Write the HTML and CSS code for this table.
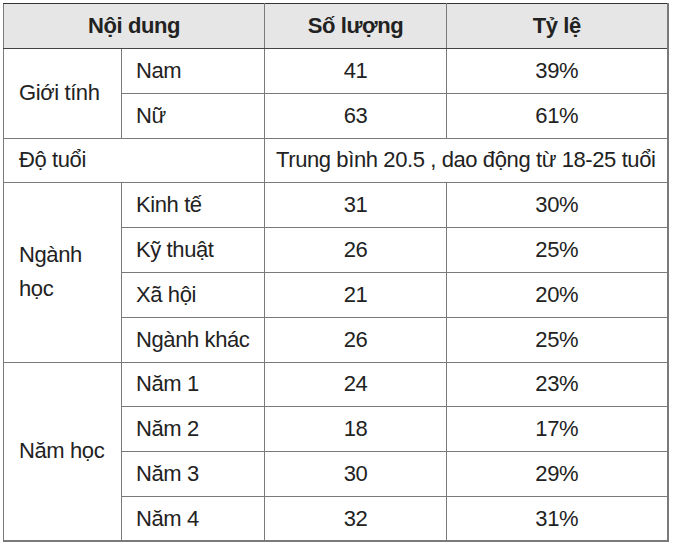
FILE: index.html
```html
<!DOCTYPE html>
<html lang="vi">
<head>
<meta charset="utf-8">
<title>Bảng thống kê</title>
<link rel="stylesheet" href="styles.css">
</head>
<body>
<table class="stats">
  <colgroup>
    <col class="c1"><col class="c2"><col class="c3"><col class="c4">
  </colgroup>
  <thead>
    <tr class="head">
      <th colspan="2">Nội dung</th>
      <th>Số lượng</th>
      <th>Tỷ lệ</th>
    </tr>
  </thead>
  <tbody>
    <tr><td class="group" rowspan="2">Giới tính</td><td class="sub">Nam</td><td class="num">41</td><td class="num">39%</td></tr>
    <tr><td class="sub">Nữ</td><td class="num">63</td><td class="num">61%</td></tr>
    <tr><td class="group" colspan="2">Độ tuổi</td><td class="num" colspan="2">Trung bình 20.5 , dao động từ 18-25 tuổi</td></tr>
    <tr><td class="group narrow" rowspan="4">Ngành học</td><td class="sub">Kinh tế</td><td class="num">31</td><td class="num">30%</td></tr>
    <tr><td class="sub">Kỹ thuật</td><td class="num">26</td><td class="num">25%</td></tr>
    <tr><td class="sub">Xã hội</td><td class="num">21</td><td class="num">20%</td></tr>
    <tr><td class="sub">Ngành khác</td><td class="num">26</td><td class="num">25%</td></tr>
    <tr><td class="group" rowspan="4">Năm học</td><td class="sub">Năm 1</td><td class="num">24</td><td class="num">23%</td></tr>
    <tr><td class="sub">Năm 2</td><td class="num">18</td><td class="num">17%</td></tr>
    <tr><td class="sub">Năm 3</td><td class="num">30</td><td class="num">29%</td></tr>
    <tr><td class="sub">Năm 4</td><td class="num">32</td><td class="num">31%</td></tr>
  </tbody>
</table>
</body>
</html>
```
FILE: styles.css
```css
html, body {
  margin: 0;
  padding: 0;
  background: #ffffff;
}

body {
  padding: 3px 0 0 3px;
  font-family: "Liberation Sans", Arial, sans-serif;
  color: #222222;
}

.stats {
  border-collapse: collapse;
  table-layout: fixed;
  width: 664px;
  font-size: 22px;
  letter-spacing: -0.4px;
  line-height: 34px;
  border-top: 1px solid #333333;
  border-left: 1px solid #333333;
  border-right: 2px solid #7a7a7a;
  border-bottom: 2px solid #7a7a7a;
}

.c1 { width: 118px; }
.c2 { width: 143px; }
.c3 { width: 182px; }
.c4 { width: 221px; }

.stats th,
.stats td {
  border: 1px solid #7a7a7a;
  padding: 0;
  vertical-align: middle;
}

.head {
  height: 45px;
  background: #e6e6e6;
}

.head th {
  font-weight: 700;
  text-align: center;
  border-bottom: 1px solid #444444;
  border-top: 1px solid #333333;
}

.stats tbody tr {
  height: 44.8px;
}

.group {
  text-align: left;
  padding-left: 15px !important;
}

.narrow {
  padding-right: 30px !important;
}

.sub {
  text-align: left;
  padding-left: 14px !important;
}

.num {
  text-align: center;
}
```
